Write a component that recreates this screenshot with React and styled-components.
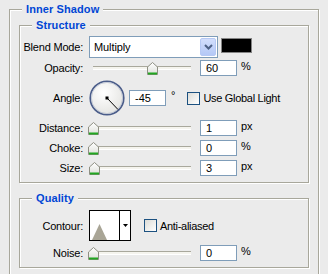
import React from 'react';
import styled, { createGlobalStyle } from 'styled-components';

const GlobalStyle = createGlobalStyle`
  html, body {
    margin: 0;
    padding: 0;
    background: #ebebeb;
    overflow: hidden;
  }
  body {
    font-family: "Liberation Sans", Arial, sans-serif;
    font-size: 11px;
    color: #000;
  }
`;

const Panel = styled.div`
  width: 328px;
  height: 274px;
  overflow: hidden;
  box-sizing: border-box;
  padding: 9px 0 0 9px;
`;

const Group = styled.div`
  box-sizing: border-box;
  border: 1px solid #a8a79b;
  box-shadow: inset 1px 1px 0 #fff, 1px 1px 0 #fff;
  width: ${p => (p.$width ? `${p.$width}px` : 'auto')};
  margin: ${p => p.$margin || '0'};
  padding: 0 0 ${p => p.$pb || 0}px;
`;

const GroupTitle = styled.div`
  width: fit-content;
  margin: -7px 0 0 12px;
  padding: 0 4px;
  background: #ebebeb;
  color: #0046d5;
  font-weight: bold;
  font-size: 11px;
  line-height: 13px;
  letter-spacing: 0.1px;
`;

const Row = styled.div`
  display: flex;
  align-items: center;
  height: ${p => p.$h || 16}px;
  margin-top: ${p => p.$mt || 0}px;
`;

const Label = styled.div`
  flex: none;
  width: 63px;
  margin-right: 6px;
  text-align: right;
  letter-spacing: -0.2px;
  white-space: nowrap;
`;

const Select = styled.div`
  box-sizing: border-box;
  flex: none;
  display: flex;
  align-items: center;
  width: 129px;
  height: 22px;
  border: 1px solid #7f9db9;
  background: #fff;
  padding: 1px;
`;

const SelectText = styled.div`
  flex: 1;
  padding-left: 3px;
  letter-spacing: -0.1px;
`;

const DropButton = styled.div`
  box-sizing: border-box;
  width: 16px;
  height: 18px;
  border: 1px solid #b6c9f4;
  border-radius: 2px;
  background: linear-gradient(#d2defc, #b4c8f6);
  display: flex;
  align-items: center;
  justify-content: center;
`;

const Swatch = styled.div`
  box-sizing: border-box;
  flex: none;
  align-self: flex-start;
  width: 31px;
  height: 15px;
  margin: 2px 0 0 3px;
  border: 1px solid #858585;
  background: #000;
`;

const SliderBox = styled.div`
  position: relative;
  flex: none;
  display: flex;
  align-items: center;
  width: 106px;
  height: 16px;
  padding: 0 4px;
  box-sizing: border-box;
  margin-right: 5px;
`;

const Track = styled.div`
  box-sizing: border-box;
  width: 100%;
  height: 4px;
  border-top: 1px solid #a9a89c;
  border-bottom: 1px solid #fff;
  background: #f5f4ee;
`;

const ThumbIcon = styled.svg`
  position: absolute;
  top: 2px;
`;

const NumBox = styled.div`
  box-sizing: border-box;
  flex: none;
  width: 37px;
  height: 16px;
  border: 1px solid #7f9db9;
  background: #fff;
  padding-left: 5px;
  line-height: 14px;
`;

const Unit = styled.div`
  margin-left: 4px;
  align-self: flex-start;
  line-height: 13px;
`;

const Degree = styled.div`
  align-self: flex-start;
  margin: 9px 0 0 5px;
  font-size: 11px;
`;

const Check = styled.div`
  box-sizing: border-box;
  flex: none;
  width: 13px;
  height: 13px;
  border: 1px solid #1c5180;
  background: linear-gradient(135deg, #dcdcd7, #fff);
  margin-left: ${p => p.$ml || 0}px;
`;

const CheckText = styled.div`
  margin-left: 3px;
  letter-spacing: -0.3px;
  white-space: nowrap;
`;

const ContourBox = styled.div`
  box-sizing: border-box;
  flex: none;
  display: flex;
  width: 42px;
  height: 31px;
  border: 1px solid #000;
  background: #fff;
`;

const ContourPreview = styled.div`
  width: 29px;
  border-right: 1px solid #000;
  display: flex;
  align-items: flex-end;
`;

const ContourArrow = styled.div`
  flex: 1;
  display: flex;
  align-items: center;
  justify-content: center;
`;

const Thumb = ({ value }) => (
  <ThumbIcon width="11" height="13" viewBox="0 0 11 13" style={{ left: 4 + value * 98 - 5 }}>
    <defs>
      <linearGradient id="tg" x1="0" y1="0" x2="0" y2="1">
        <stop offset="0" stopColor="#ffffff" />
        <stop offset="1" stopColor="#dedfd9" />
      </linearGradient>
    </defs>
    <path d="M0.5 5 L5.5 0.5 L10.5 5 V12.5 H0.5 Z" fill="url(#tg)" stroke="#8e8f83" />
    <rect x="1" y="10.5" width="9" height="2" fill="#21a621" />
  </ThumbIcon>
);

const Slider = ({ value }) => (
  <SliderBox>
    <Track />
    <Thumb value={value} />
  </SliderBox>
);

const Dial = () => (
  <svg width="36" height="36" viewBox="0 0 36 36" style={{ flex: 'none', marginRight: 4 }}>
    <defs>
      <radialGradient id="dg" cx="0.4" cy="0.35" r="0.7">
        <stop offset="0" stopColor="#ffffff" />
        <stop offset="1" stopColor="#e3e3e0" />
      </radialGradient>
    </defs>
    <circle cx="18" cy="18" r="16.8" fill="url(#dg)" stroke="#4b5d8a" strokeWidth="1.6" />
    <circle cx="18" cy="18" r="15.6" fill="none" stroke="#aab3c8" strokeWidth="0.6" />
    <line x1="18" y1="18" x2="29" y2="29.5" stroke="#000" strokeWidth="1" />
    <rect x="16.5" y="16.5" width="3" height="3" fill="#000" />
  </svg>
);

const SliderRow = ({ label, value, frac, unit, mt }) => (
  <Row $mt={mt}>
    <Label>{label}</Label>
    <Slider value={frac} />
    <NumBox>{value}</NumBox>
    <Unit>{unit}</Unit>
  </Row>
);

export default function App() {
  return (
    <>
      <GlobalStyle />
      <Panel>
        <Group $width={310} $pb={20}>
          <GroupTitle>Inner Shadow</GroupTitle>

          <Group $margin="9px 9px 0" $pb={6}>
            <GroupTitle>Structure</GroupTitle>
            <Row $h={22} $mt={4}>
              <Label>Blend Mode:</Label>
              <Select>
                <SelectText>Multiply</SelectText>
                <DropButton>
                  <svg width="9" height="6" viewBox="0 0 9 6">
                    <path d="M1 1 L4.5 4.5 L8 1" fill="none" stroke="#4d6185" strokeWidth="2" />
                  </svg>
                </DropButton>
              </Select>
              <Swatch />
            </Row>
            <SliderRow label="Opacity:" value="60" frac={0.6} unit="%" mt={2} />
            <Row $h={36} $mt={4}>
              <Label>Angle:</Label>
              <Dial />
              <NumBox>-45</NumBox>
              <Degree>°</Degree>
              <Check $ml={12} />
              <CheckText>Use Global Light</CheckText>
            </Row>
            <SliderRow label="Distance:" value="1" frac={0.004} unit="px" mt={4} />
            <SliderRow label="Choke:" value="0" frac={0} unit="%" mt={4} />
            <SliderRow label="Size:" value="3" frac={0.012} unit="px" mt={4} />
          </Group>

          <Group $margin="15px 9px 0" $pb={6}>
            <GroupTitle>Quality</GroupTitle>
            <Row $h={31} $mt={5}>
              <Label>Contour:</Label>
              <ContourBox>
                <ContourPreview>
                  <svg width="29" height="29" viewBox="0 0 29 29">
                    <polygon points="2,29 9.5,13 17,29" fill="#a9a596" />
                  </svg>
                </ContourPreview>
                <ContourArrow>
                  <svg width="5" height="3" viewBox="0 0 5 3">
                    <polygon points="0,0 5,0 2.5,3" fill="#000" />
                  </svg>
                </ContourArrow>
              </ContourBox>
              <Check $ml={13} />
              <CheckText>Anti-aliased</CheckText>
            </Row>
            <SliderRow label="Noise:" value="0" frac={0} unit="%" mt={4} />
          </Group>
        </Group>
      </Panel>
    </>
  );
}
